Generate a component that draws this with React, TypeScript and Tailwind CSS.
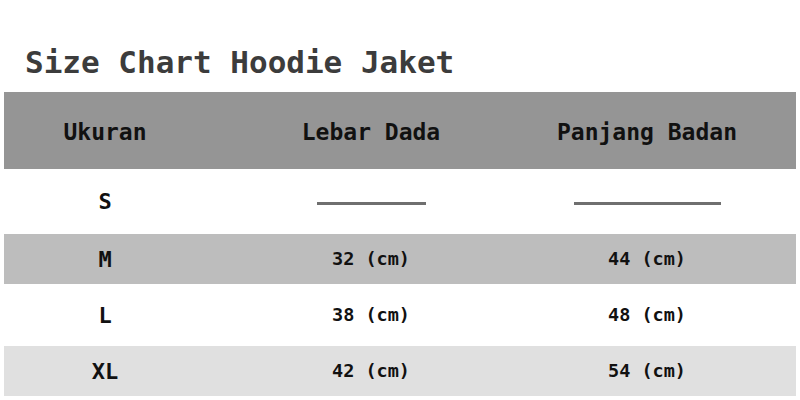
import React from 'react'

const rows = [
  { size: 'S', lebar: null, panjang: null, bg: 'bg-white', h: 'h-[65px]' },
  { size: 'M', lebar: '32 (cm)', panjang: '44 (cm)', bg: 'bg-[#bdbdbd]', h: 'h-[50px]' },
  { size: 'L', lebar: '38 (cm)', panjang: '48 (cm)', bg: 'bg-white', h: 'h-[62px]' },
  { size: 'XL', lebar: '42 (cm)', panjang: '54 (cm)', bg: 'bg-[#e0e0e0]', h: 'h-[50px]' },
]

const App = () => {
  return (
    <div className="w-[800px] h-[400px] bg-white overflow-hidden font-['DejaVu_Sans_Mono',monospace] font-bold">
      <h1 className="pt-[44px] pl-[25px] h-[92px] text-[31px] leading-[36px] text-[#3c3c3c]">
        Size Chart Hoodie Jaket
      </h1>
      <div className="mx-[4px]">
        <div className="grid grid-cols-[202px_330px_222px] h-[77px] pt-[4px] items-center bg-[#959595] text-[23px] text-[#111]">
          <div className="text-center">Ukuran</div>
          <div className="text-center">Lebar Dada</div>
          <div className="text-center">Panjang Badan</div>
        </div>
        {rows.map((r) => (
          <div
            key={r.size}
            className={`grid grid-cols-[202px_330px_222px] items-center text-[#111] ${r.bg} ${r.h}`}
          >
            <div className="text-center text-[22px]">{r.size}</div>
            <div className="flex justify-center text-[18.5px]">
              {r.lebar ?? <span className="block w-[109px] h-[3px] bg-[#6f6f6f] mt-[3px]" />}
            </div>
            <div className="flex justify-center text-[18.5px]">
              {r.panjang ?? <span className="block w-[147px] h-[3px] bg-[#6f6f6f] mt-[3px]" />}
            </div>
          </div>
        ))}
      </div>
    </div>
  )
}

export default App
